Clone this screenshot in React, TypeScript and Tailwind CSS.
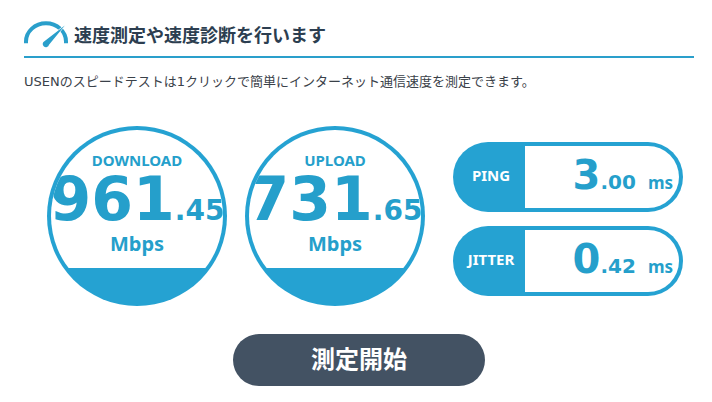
type Speed = {
  label: string;
  whole: string;
  fraction: string;
};

const speeds: Speed[] = [
  { label: "DOWNLOAD", whole: "961", fraction: ".45" },
  { label: "UPLOAD", whole: "731", fraction: ".65" },
];

const latencies: Speed[] = [
  { label: "PING", whole: "3", fraction: ".00" },
  { label: "JITTER", whole: "0", fraction: ".42" },
];

function GaugeIcon() {
  return (
    <svg width="44" height="28" viewBox="0 0 44 28" aria-hidden="true" className="shrink-0">
      <path
        d="M2 22.3V20.5C2 10.5 11 2.2 22 2.2C33 2.2 42 10.5 42 20.5V22.3"
        fill="none"
        stroke="#2a9fcb"
        strokeWidth="4"
      />
      {/* needle, with a white edge that cuts it free of the arc */}
      <path
        d="M40.8 4.4L25 23.8A3.2 3.2 0 1 1 20.4 20.2Z"
        fill="#2a9fcb"
        stroke="#fff"
        strokeWidth="1.2"
        paintOrder="stroke"
      />
    </svg>
  );
}

function SpeedCircle({ label, whole, fraction }: Speed) {
  return (
    <div className="size-[180px] shrink-0 overflow-hidden rounded-full bg-[#25a2d2] p-1">
      <div className="size-full overflow-hidden rounded-full">
        <div className="flex h-[138px] flex-col items-center bg-white text-[#259fcb]">
          <div className="mt-[18px] font-['Noto_Sans',sans-serif] text-[15px] leading-6">
            {label}
          </div>
          <div className="mt-0.5 flex items-baseline leading-[50px] whitespace-nowrap">
            <span className="text-[60px]">{whole}</span>
            <span className="text-[28px] leading-none">{fraction}</span>
          </div>
          <div className="mt-[5px] font-['Noto_Sans',sans-serif] text-[20px] leading-7">Mbps</div>
        </div>
      </div>
    </div>
  );
}

function LatencyPill({ label, whole, fraction }: Speed) {
  return (
    <div className="flex h-[70px] items-stretch overflow-hidden rounded-full bg-[#25a2d2] p-1">
      <div className="flex w-[68px] shrink-0 items-center justify-center pb-1 font-['Noto_Sans',sans-serif] text-[15px] text-white">
        {label}
      </div>
      <div className="flex grow items-baseline justify-end rounded-r-full bg-white pr-1.5 leading-[58px] text-[#259fcb]">
        <span className="text-[40px]">{whole}</span>
        <span className="text-[20px]">{fraction}</span>
        <span className="ml-3 font-['Noto_Sans',sans-serif] text-[17px]">ms</span>
      </div>
    </div>
  );
}

export default function App() {
  return (
    <main className="bg-white pt-[18px] pr-[18px] pb-4 pl-6 font-['DejaVu_Sans','Noto_Sans_CJK_JP',sans-serif]">
      <header className="flex h-10 items-start gap-1.5 border-b-2 border-[#2a9fcb] pt-[3px]">
        <GaugeIcon />
        <h1 className="text-[18px] leading-[30px] font-bold text-[#2c3e50]">
          速度測定や速度診断を行います
        </h1>
      </header>
      <p className="mt-3 text-[13px] leading-6 text-[#3a4149]">
        USENのスピードテストは1クリックで簡単にインターネット通信速度を測定できます。
      </p>

      <section className="mt-8 flex items-start justify-center gap-7 pl-3 font-bold">
        <div className="flex gap-[18px]">
          {speeds.map((speed) => (
            <SpeedCircle key={speed.label} {...speed} />
          ))}
        </div>
        <div className="mt-4 flex w-[230px] shrink-0 flex-col gap-3.5">
          {latencies.map((latency) => (
            <LatencyPill key={latency.label} {...latency} />
          ))}
        </div>
      </section>

      <div className="mt-7 flex justify-center">
        <button
          type="button"
          className="h-[52px] w-[252px] cursor-pointer rounded-full bg-[#435263] text-[24px] font-bold text-white"
        >
          測定開始
        </button>
      </div>
    </main>
  );
}
